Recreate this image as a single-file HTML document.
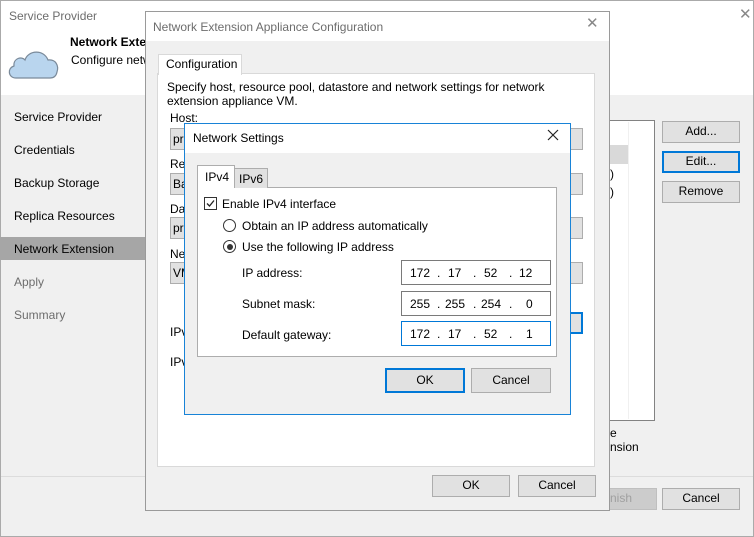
<!DOCTYPE html>
<html><head><style>
*{margin:0;padding:0;box-sizing:border-box}
body{width:754px;height:537px;position:relative;overflow:hidden;font-family:"Liberation Sans",sans-serif;font-size:12px;color:#000;background:#f0f0f0}
.a{position:absolute}
.t{position:absolute;white-space:nowrap;line-height:14px}
.btn{position:absolute;background:#e1e1e1;border:1px solid #adadad;text-align:center;line-height:19px}
.btnb{border:2px solid #0078d7;line-height:17px}
.fld{position:absolute;background:#e1e1e1;border:1px solid #adadad}
.ip{position:absolute;background:#fff;border:1px solid #7a7a7a;font-size:12px}
.ip span{position:absolute;top:5px}
</style></head><body>
<div class="a" style="left:0;top:0;width:754px;height:537px;border:1px solid #aaa;background:#f0f0f0"></div>
<div class="a" style="left:1px;top:1px;width:752px;height:94px;background:#fff"></div>
<div class="t" style="left:9px;top:9px;color:#6d6d6d">Service Provider</div>
<div class="t" style="left:739px;top:8px;color:#888;font-size:15px">✕</div>
<svg class="a" style="left:6px;top:44px" width="54" height="36" viewBox="0 0 54 36"><path d="M10 34 C2 34 1 24 8 22 C7 14 16 12 19 16 C22 6 38 5 42 16 C50 15 53 22 51 28 C50 33 47 34 44 34 Z" fill="#b9d5ee" stroke="#7a8a9a" stroke-width="1.2"/></svg>
<div class="t" style="left:70px;top:35px;font-weight:bold">Network Extension</div>
<div class="t" style="left:71px;top:53px">Configure network extension</div>
<div class="a" style="left:0;top:237px;width:145px;height:23px;background:#a6a6a6"></div>
<div class="t" style="left:14px;top:110px">Service Provider</div>
<div class="t" style="left:14px;top:143px">Credentials</div>
<div class="t" style="left:14px;top:176px">Backup Storage</div>
<div class="t" style="left:14px;top:209px">Replica Resources</div>
<div class="t" style="left:14px;top:242px">Network Extension</div>
<div class="t" style="left:14px;top:275px;color:#6d6d6d">Apply</div>
<div class="t" style="left:14px;top:308px;color:#6d6d6d">Summary</div>
<div class="a" style="left:560px;top:120px;width:95px;height:301px;background:#fff;border:1px solid #828282"></div>
<div class="a" style="left:560px;top:145px;width:69px;height:19px;background:#d9d9d9"></div>
<div class="a" style="left:628px;top:122px;width:1px;height:297px;background:#f0f0f0"></div>
<div class="t" style="left:610px;top:167px">)</div>
<div class="t" style="left:610px;top:185px">)</div>
<div class="t" style="left:610px;top:426px">e</div>
<div class="t" style="left:610px;top:440px">nsion</div>
<div class="btn" style="left:662px;top:121px;width:78px;height:22px">Add...</div>
<div class="btn btnb" style="left:662px;top:151px;width:78px;height:22px">Edit...</div>
<div class="btn" style="left:662px;top:181px;width:78px;height:22px">Remove</div>
<div class="a" style="left:1px;top:476px;width:752px;height:1px;background:#dcdcdc"></div>
<div class="btn" style="left:580px;top:488px;width:77px;height:22px;color:#a0a0a0;background:#ccc;border-color:#bfbfbf;text-align:right;padding-right:24px">nish</div>
<div class="btn" style="left:662px;top:488px;width:78px;height:22px">Cancel</div>

<div class="a" style="left:145px;top:11px;width:465px;height:500px;border:1px solid #9a9a9a;background:#f0f0f0"></div>
<div class="a" style="left:146px;top:12px;width:463px;height:29px;background:#fff"></div>
<div class="t" style="left:153px;top:20px;color:#6d6d6d">Network Extension Appliance Configuration</div>
<div class="t" style="left:586px;top:17px;color:#888;font-size:15px">✕</div>
<div class="a" style="left:157px;top:73px;width:438px;height:394px;background:#fff;border:1px solid #d9d9d9"></div>
<div class="a" style="left:158px;top:54px;width:84px;height:21px;background:#fff;border:1px solid #d9d9d9;border-bottom:none"></div>
<div class="t" style="left:166px;top:57px">Configuration</div>
<div class="t" style="left:167px;top:80px">Specify host, resource pool, datastore and network settings for network</div>
<div class="t" style="left:167px;top:94px">extension appliance VM.</div>
<div class="t" style="left:170px;top:111px">Host:</div>
<div class="fld" style="left:170px;top:128px;width:413px;height:22px"></div><div class="t" style="left:173px;top:132px">pr</div>
<div class="t" style="left:170px;top:157px">Re</div>
<div class="fld" style="left:170px;top:173px;width:413px;height:22px"></div><div class="t" style="left:173px;top:177px">Ba</div>
<div class="t" style="left:170px;top:202px">Da</div>
<div class="fld" style="left:170px;top:217px;width:413px;height:22px"></div><div class="t" style="left:173px;top:221px">pr</div>
<div class="t" style="left:170px;top:247px">Ne</div>
<div class="fld" style="left:170px;top:262px;width:413px;height:22px"></div><div class="t" style="left:173px;top:266px">VM</div>
<div class="t" style="left:170px;top:325px">IPv4</div>
<div class="fld" style="left:500px;top:312px;width:83px;height:22px;border:2px solid #0078d7"></div>
<div class="t" style="left:170px;top:355px">IPv6</div>
<div class="btn" style="left:432px;top:475px;width:78px;height:22px">OK</div>
<div class="btn" style="left:518px;top:475px;width:78px;height:22px">Cancel</div>

<div class="a" style="left:184px;top:123px;width:387px;height:292px;border:1px solid #1883d7;background:#f0f0f0"></div>
<div class="a" style="left:185px;top:124px;width:385px;height:29px;background:#fff"></div>
<div class="t" style="left:193px;top:131px">Network Settings</div>
<svg class="a" style="left:547px;top:129px" width="12" height="12"><path d="M1 1L11 11M11 1L1 11" stroke="#222" stroke-width="1.2"/></svg>
<div class="a" style="left:197px;top:187px;width:360px;height:170px;background:#fff;border:1px solid #adadad"></div>
<div class="a" style="left:234px;top:168px;width:34px;height:20px;background:#e1e1e1;border:1px solid #adadad;border-bottom:none"></div>
<div class="t" style="left:239px;top:172px">IPv6</div>
<div class="a" style="left:197px;top:165px;width:38px;height:23px;background:#fff;border:1px solid #adadad;border-bottom:none"></div>
<div class="t" style="left:205px;top:170px">IPv4</div>
<div class="a" style="left:204px;top:197px;width:13px;height:13px;border:1px solid #333;background:#fff"></div>
<svg class="a" style="left:206px;top:199px" width="9" height="9"><path d="M1 4.5L3.5 7L8 1.5" stroke="#222" stroke-width="1.3" fill="none"/></svg>
<div class="t" style="left:222px;top:197px">Enable IPv4 interface</div>
<div class="a" style="left:223px;top:219px;width:13px;height:13px;border:1px solid #333;border-radius:50%;background:#fff"></div>
<div class="t" style="left:242px;top:219px">Obtain an IP address automatically</div>
<div class="a" style="left:223px;top:240px;width:13px;height:13px;border:1px solid #333;border-radius:50%;background:#fff"></div>
<div class="a" style="left:226.5px;top:243.5px;width:6px;height:6px;border-radius:50%;background:#333"></div>
<div class="t" style="left:242px;top:240px">Use the following IP address</div>
<div class="t" style="left:242px;top:266px">IP address:</div>
<div class="t" style="left:242px;top:297px">Subnet mask:</div>
<div class="t" style="left:242px;top:328px">Default gateway:</div>
<div class="ip" style="left:401px;top:260px;width:150px;height:25px"><span style="left:8px">172</span><span style="left:35px">.</span><span style="left:46px">17</span><span style="left:71px">.</span><span style="left:82px">52</span><span style="left:107px">.</span><span style="left:117px">12</span></div>
<div class="ip" style="left:401px;top:291px;width:150px;height:25px"><span style="left:8px">255</span><span style="left:35px">.</span><span style="left:43px">255</span><span style="left:71px">.</span><span style="left:79px">254</span><span style="left:107px">.</span><span style="left:124px">0</span></div>
<div class="ip" style="left:401px;top:321px;width:150px;height:25px;border-color:#0078d7"><span style="left:8px">172</span><span style="left:35px">.</span><span style="left:46px">17</span><span style="left:71px">.</span><span style="left:82px">52</span><span style="left:107px">.</span><span style="left:124px">1</span></div>
<div class="btn btnb" style="left:385px;top:368px;width:80px;height:25px;line-height:21px">OK</div>
<div class="btn" style="left:471px;top:368px;width:80px;height:25px;line-height:23px">Cancel</div>
</body></html>
